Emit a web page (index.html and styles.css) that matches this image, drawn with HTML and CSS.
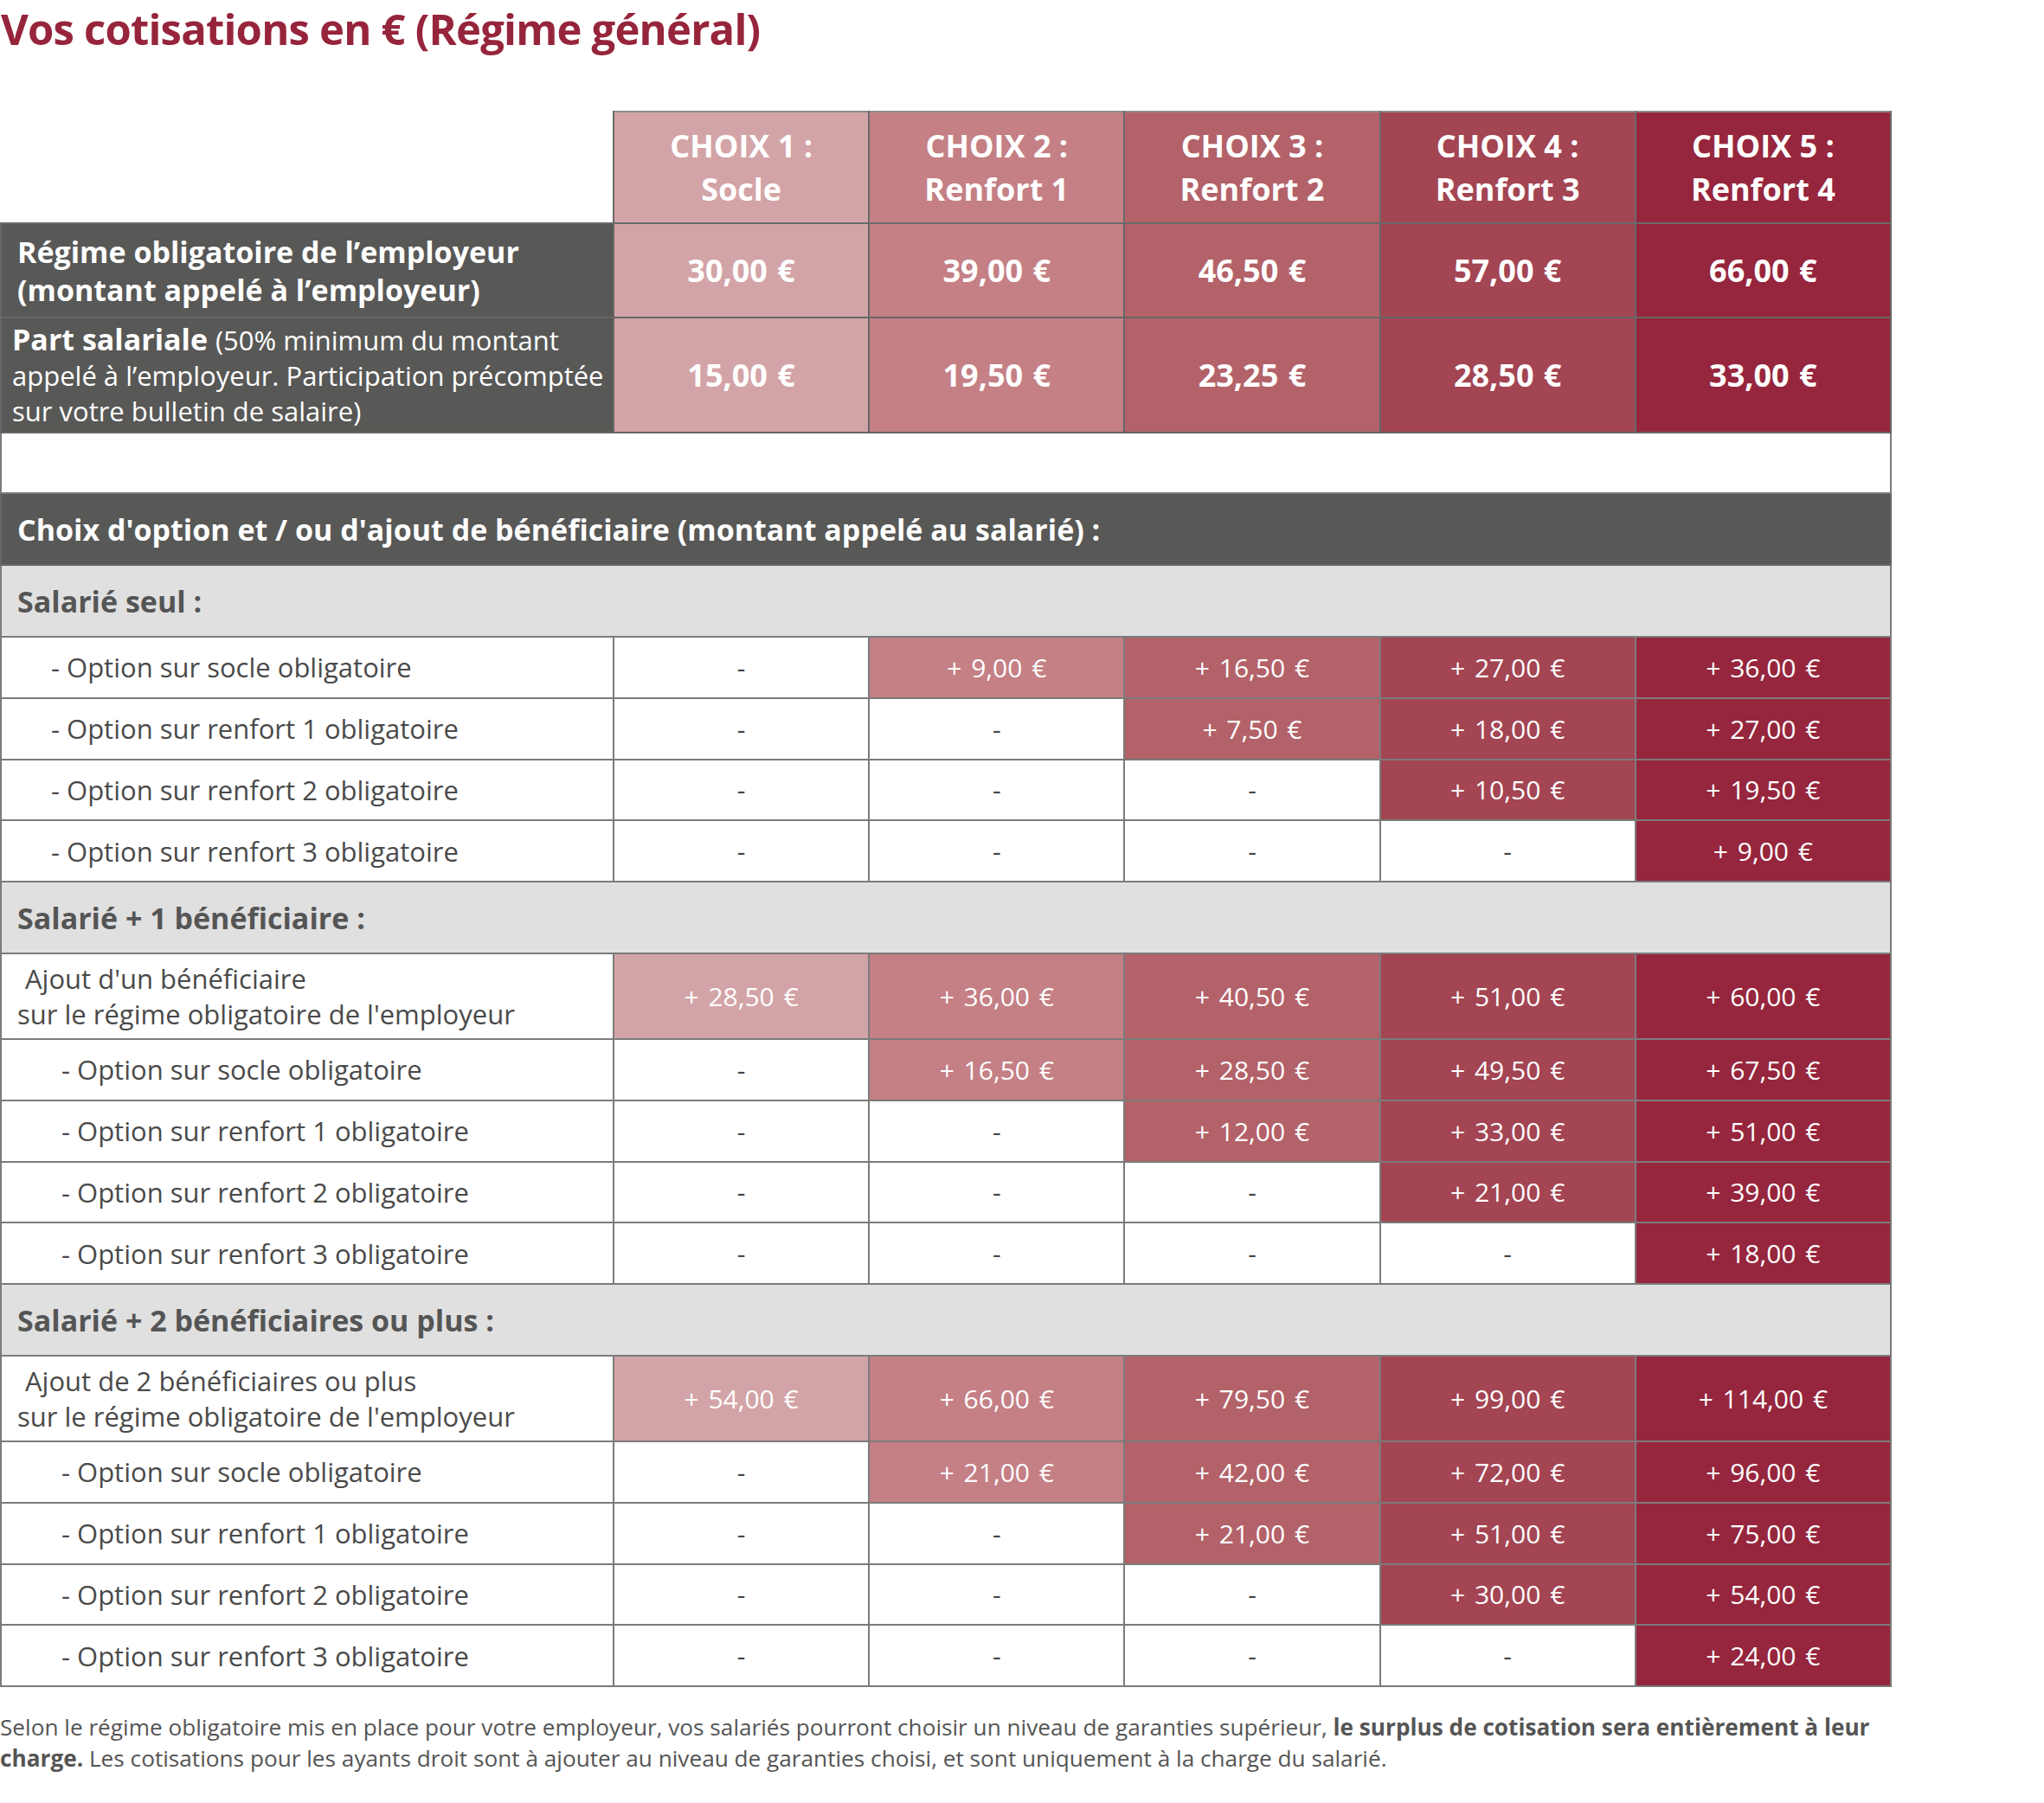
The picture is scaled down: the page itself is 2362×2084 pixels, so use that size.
FILE: index.html
```html
<!DOCTYPE html>
<html lang="fr">
<head>
<meta charset="utf-8">
<title>Vos cotisations</title>
<link rel="stylesheet" href="styles.css">
</head>
<body>
<h1 class="title">Vos cotisations en € (Régime général)</h1>
<table class="grid">
  <colgroup><col class="c-label"><col class="c-val"><col class="c-val"><col class="c-val"><col class="c-val"><col class="c-val"></colgroup>
  <thead>
    <tr class="r-head">
      <th class="blank"></th>
      <th class="k1">CHOIX 1 :<br>Socle</th>
      <th class="k2">CHOIX 2 :<br>Renfort 1</th>
      <th class="k3">CHOIX 3 :<br>Renfort 2</th>
      <th class="k4">CHOIX 4 :<br>Renfort 3</th>
      <th class="k5">CHOIX 5 :<br>Renfort 4</th>
    </tr>
  </thead>
  <tbody>
    <tr class="r-main">
      <th class="dark lbl-main">Régime obligatoire de l’employeur<br>(montant appelé à l’employeur)</th>
      <td class="k1 big">30,00 €</td><td class="k2 big">39,00 €</td><td class="k3 big">46,50 €</td><td class="k4 big">57,00 €</td><td class="k5 big">66,00 €</td>
    </tr>
    <tr class="r-part">
      <th class="dark lbl-part"><b>Part salariale</b> <span class="small">(50% minimum du montant<br>appelé à l’employeur. Participation précomptée<br>sur votre bulletin de salaire)</span></th>
      <td class="k1 big">15,00 €</td><td class="k2 big">19,50 €</td><td class="k3 big">23,25 €</td><td class="k4 big">28,50 €</td><td class="k5 big">33,00 €</td>
    </tr>
    <tr class="r-space"><td colspan="6" class="space"></td></tr>
    <tr class="r-dark"><th colspan="6" class="dark band">Choix d'option et / ou d'ajout de bénéficiaire (montant appelé au salarié) :</th></tr>

    <tr class="r-sub"><th colspan="6" class="sub">Salarié seul :</th></tr>
    <tr class="r-opt"><th class="lbl ind1">- Option sur socle obligatoire</th><td class="dash">-</td><td class="k2">+ 9,00 €</td><td class="k3">+ 16,50 €</td><td class="k4">+ 27,00 €</td><td class="k5">+ 36,00 €</td></tr>
    <tr class="r-opt"><th class="lbl ind1">- Option sur renfort 1 obligatoire</th><td class="dash">-</td><td class="dash">-</td><td class="k3">+ 7,50 €</td><td class="k4">+ 18,00 €</td><td class="k5">+ 27,00 €</td></tr>
    <tr class="r-opt"><th class="lbl ind1">- Option sur renfort 2 obligatoire</th><td class="dash">-</td><td class="dash">-</td><td class="dash">-</td><td class="k4">+ 10,50 €</td><td class="k5">+ 19,50 €</td></tr>
    <tr class="r-opt"><th class="lbl ind1">- Option sur renfort 3 obligatoire</th><td class="dash">-</td><td class="dash">-</td><td class="dash">-</td><td class="dash">-</td><td class="k5">+ 9,00 €</td></tr>

    <tr class="r-sub"><th colspan="6" class="sub">Salarié + 1 bénéficiaire :</th></tr>
    <tr class="r-add"><th class="lbl add"><span class="add1">Ajout d'un bénéficiaire</span><br>sur le régime obligatoire de l'employeur</th><td class="k1">+ 28,50 €</td><td class="k2">+ 36,00 €</td><td class="k3">+ 40,50 €</td><td class="k4">+ 51,00 €</td><td class="k5">+ 60,00 €</td></tr>
    <tr class="r-opt"><th class="lbl ind2">- Option sur socle obligatoire</th><td class="dash">-</td><td class="k2">+ 16,50 €</td><td class="k3">+ 28,50 €</td><td class="k4">+ 49,50 €</td><td class="k5">+ 67,50 €</td></tr>
    <tr class="r-opt"><th class="lbl ind2">- Option sur renfort 1 obligatoire</th><td class="dash">-</td><td class="dash">-</td><td class="k3">+ 12,00 €</td><td class="k4">+ 33,00 €</td><td class="k5">+ 51,00 €</td></tr>
    <tr class="r-opt"><th class="lbl ind2">- Option sur renfort 2 obligatoire</th><td class="dash">-</td><td class="dash">-</td><td class="dash">-</td><td class="k4">+ 21,00 €</td><td class="k5">+ 39,00 €</td></tr>
    <tr class="r-opt"><th class="lbl ind2">- Option sur renfort 3 obligatoire</th><td class="dash">-</td><td class="dash">-</td><td class="dash">-</td><td class="dash">-</td><td class="k5">+ 18,00 €</td></tr>

    <tr class="r-sub"><th colspan="6" class="sub">Salarié + 2 bénéficiaires ou plus :</th></tr>
    <tr class="r-add"><th class="lbl add"><span class="add1">Ajout de 2 bénéficiaires ou plus</span><br>sur le régime obligatoire de l'employeur</th><td class="k1">+ 54,00 €</td><td class="k2">+ 66,00 €</td><td class="k3">+ 79,50 €</td><td class="k4">+ 99,00 €</td><td class="k5">+ 114,00 €</td></tr>
    <tr class="r-opt"><th class="lbl ind2">- Option sur socle obligatoire</th><td class="dash">-</td><td class="k2">+ 21,00 €</td><td class="k3">+ 42,00 €</td><td class="k4">+ 72,00 €</td><td class="k5">+ 96,00 €</td></tr>
    <tr class="r-opt"><th class="lbl ind2">- Option sur renfort 1 obligatoire</th><td class="dash">-</td><td class="dash">-</td><td class="k3">+ 21,00 €</td><td class="k4">+ 51,00 €</td><td class="k5">+ 75,00 €</td></tr>
    <tr class="r-opt"><th class="lbl ind2">- Option sur renfort 2 obligatoire</th><td class="dash">-</td><td class="dash">-</td><td class="dash">-</td><td class="k4">+ 30,00 €</td><td class="k5">+ 54,00 €</td></tr>
    <tr class="r-opt"><th class="lbl ind2">- Option sur renfort 3 obligatoire</th><td class="dash">-</td><td class="dash">-</td><td class="dash">-</td><td class="dash">-</td><td class="k5">+ 24,00 €</td></tr>
  </tbody>
</table>
<p class="note">Selon le régime obligatoire mis en place pour votre employeur, vos salariés pourront choisir un niveau de garanties supérieur, <b>le surplus de cotisation sera entièrement à leur<br>charge.</b> Les cotisations pour les ayants droit sont à ajouter au niveau de garanties choisi, et sont uniquement à la charge du salarié.</p>
</body>
</html>
```

FILE: styles.css
```css
* { box-sizing: border-box; }

body {
  margin: 0;
  width: 2362px;
  background: #ffffff;
  color: #4a4a4a;
  font-family: "Open Sans", "Noto Sans", "DejaVu Sans", sans-serif;
}

.title {
  margin: 0 0 62px 0;
  padding-left: 1px;
  font-size: 49px;
  line-height: 66px;
  font-weight: 700;
  letter-spacing: -0.8px;
  color: #96253c;
}

.grid {
  border-collapse: collapse;
  table-layout: fixed;
  width: 2184px;
}

.c-label { width: 708px; }
.c-val { width: 295.2px; }

.grid th,
.grid td {
  border: 2px solid #7b7b7b;
  padding: 0;
  text-align: center;
  vertical-align: middle;
  font-weight: 400;
  white-space: nowrap;
}

.grid th.blank {
  border-top: none;
  border-left: none;
  background: #ffffff;
}

.k1 { background: #d3a4a7; color: #ffffff; }
.k2 { background: #c48085; color: #ffffff; }
.k3 { background: #b36269; color: #ffffff; }
.k4 { background: #a34553; color: #ffffff; }
.k5 { background: #96263d; color: #ffffff; }

.r-head { height: 129px; }
.r-head th {
  font-size: 36px;
  line-height: 50px;
  font-weight: 700;
  border-color: #6a6a6a;
  border-top-color: #8c8c8c;
}

.r-main { height: 109px; }
.r-part { height: 133px; }
.r-space { height: 70px; }
.r-dark { height: 83px; }
.r-sub { height: 83px; }
.r-opt { height: 70.75px; }
.r-add { height: 99px; }

.grid td.big {
  font-size: 36px;
  font-weight: 700;
  word-spacing: 2px;
  border-color: #666666;
}

.grid .dark {
  background: #585856;
  color: #ffffff;
  text-align: left;
  border-color: #666666;
}

.grid .lbl-main {
  padding-left: 18px;
  font-size: 34px;
  line-height: 44px;
  font-weight: 700;
}

.grid .lbl-part {
  padding-left: 12px;
  font-size: 34px;
  line-height: 40px;
}
.lbl-part b { font-weight: 700; }
.lbl-part .small { font-size: 31px; }

.grid .band {
  padding-left: 18px;
  font-size: 34px;
  font-weight: 700;
}

.grid .sub {
  background: #e0e0e0;
  color: #555555;
  text-align: left;
  padding-left: 18px;
  font-size: 34px;
  font-weight: 700;
}

.grid td.space { background: #ffffff; }

.grid td {
  font-size: 30px;
  word-spacing: 3px;
}

.grid td.dash { background: #ffffff; color: #444444; }

.grid .lbl {
  text-align: left;
  font-size: 31px;
  color: #4a4a4a;
  background: #ffffff;
}

.grid .ind1 { padding-left: 57px; }
.grid .ind2 { padding-left: 69px; }
.grid .add { padding-left: 18px; line-height: 41px; }
.add1 { padding-left: 9px; }

.note {
  margin: 28px 0 0 0;
  font-size: 26.2px;
  line-height: 36px;
  color: #555555;
  white-space: nowrap;
}
.note b { font-weight: 700; }
```
